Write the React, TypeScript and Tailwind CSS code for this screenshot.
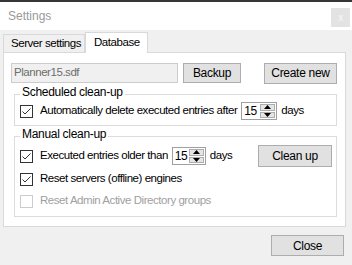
import React from "react";

// WinForms "Settings" dialog, Database tab
function Check({ checked, disabled }: { checked?: boolean; disabled?: boolean }) {
  return (
    <span
      className={`grid h-[13px] w-[13px] shrink-0 place-items-center border bg-white ${
        disabled ? "border-[#cccccc]" : "border-[#333333]"
      }`}
    >
      {checked && (
        <svg width="11" height="11" viewBox="0 0 11 11">
          <polyline points="1.5,5.5 4,8 9.5,2.5" fill="none" stroke="#333333" strokeWidth="1" />
        </svg>
      )}
    </span>
  );
}

function Spinner({ value, w }: { value: string; w: string }) {
  return (
    <span className={`flex h-[18px] shrink-0 items-center border border-[#a0a0a0] bg-white ${w}`}>
      <span className="flex-1 pl-[2px] text-[12px] leading-none text-black">{value}</span>
      <span className="mr-[1px] flex h-[14px] w-[15px] flex-col gap-[1px]">
        <span className="grid flex-1 place-items-center border border-[#adadad] bg-[#e5e5e5]">
          <svg width="7" height="4" viewBox="0 0 7 4">
            <polygon points="0,4 7,4 3.5,0" fill="#000" />
          </svg>
        </span>
        <span className="grid flex-1 place-items-center border border-[#adadad] bg-[#e5e5e5]">
          <svg width="7" height="4" viewBox="0 0 7 4">
            <polygon points="0,0 7,0 3.5,4" fill="#000" />
          </svg>
        </span>
      </span>
    </span>
  );
}

function Btn({ children, w, h = "h-[21px]" }: { children: React.ReactNode; w: string; h?: string }) {
  return (
    <button className={`${w} ${h} shrink-0 border border-[#adadad] bg-[#e1e1e1] text-[12px] leading-none tracking-[-0.3px] text-black`}>
      {children}
    </button>
  );
}

function Group({ title, h, children }: { title: string; h: string; children: React.ReactNode }) {
  return (
    <div className={`relative ml-[10px] mr-[8px] border border-[#dcdcdc] ${h}`}>
      <span className="absolute -top-[10px] left-[5px] bg-white px-[2px] text-[12px] leading-[14px] tracking-[-0.3px] text-black">
        {title}
      </span>
      {children}
    </div>
  );
}

export default function App() {
  return (
    <div
      className="flex h-[265px] w-[352px] flex-col overflow-hidden whitespace-nowrap bg-[#f0f0f0] text-[11.5px] tracking-[-0.45px] text-black"
      style={{ fontFamily: '"Liberation Sans", Arial, sans-serif' }}
    >
      <div className="h-[2px] bg-[#363636]" />
      <div className="flex h-[28px] items-start justify-between bg-white">
        <span className="mt-[6px] pl-[8px] text-[12px] leading-[16px] tracking-normal text-[#9a9a9a]">Settings</span>
        <span className="mr-[2px] mt-[6px] grid h-[19px] w-[19px] place-items-center bg-[#e3e3e3] text-[10px] leading-none text-[#f7f7f7]">
          x
        </span>
      </div>

      {/* tabs */}
      <div className="flex h-[22px] items-end pl-[3px]">
        <div className="flex h-[18px] w-[82px] items-center border border-b-0 border-[#d9d9d9] bg-[#f0f0f0] pl-[7px] leading-none">
          Server settings
        </div>
        <div className="relative z-10 -mb-[1px] flex h-[21px] w-[63px] items-center border border-b-0 border-[#d9d9d9] bg-white pl-[8px] leading-none">
          Database
        </div>
      </div>

      <div className="ml-[3px] flex h-[175px] w-[343px] flex-col border border-[#d9d9d9] bg-white">
        <div className="mt-[9px] flex h-[22px] items-center pl-[7px]">
          <span className="flex h-[20px] w-[167px] items-center border border-[#cccccc] bg-[#f0f0f0] pl-[2px] leading-none text-[#6d6d6d]">
            Planner15.sdf
          </span>
          <span className="ml-[5px]">
            <Btn w="w-[58px]" h="h-[20px]">Backup</Btn>
          </span>
          <span className="ml-[23px]">
            <Btn w="w-[73px]">Create new</Btn>
          </span>
        </div>

        <div className="mt-[10px]">
          <Group title="Scheduled clean-up" h="h-[32px]">
            <div className="mt-[7px] flex h-[18px] items-center pl-[5px]">
              <Check checked />
              <span className="ml-[7px] leading-none">Automatically delete executed entries after</span>
              <span className="ml-[4px]">
                <Spinner value="15" w="w-[36px]" />
              </span>
              <span className="ml-[4px] leading-none">days</span>
            </div>
          </Group>
        </div>

        <div className="mt-[10px]">
          <Group title="Manual clean-up" h="h-[81px]">
            <div className="mt-[8px] flex h-[22px] items-center pl-[5px] pr-[4px]">
              <Check checked />
              <span className="ml-[7px] leading-none">Executed entries older than</span>
              <span className="ml-[4px]">
                <Spinner value="15" w="w-[34px]" />
              </span>
              <span className="ml-[4px] leading-none">days</span>
              <span className="ml-auto">
                <Btn w="w-[74px]" h="h-[22px]">Clean up</Btn>
              </span>
            </div>
            <div className="mt-[1px] flex h-[22px] items-center pl-[5px]">
              <Check checked />
              <span className="ml-[7px] leading-none">Reset servers (offline) engines</span>
            </div>
            <div className="flex h-[22px] items-center pl-[5px]">
              <Check disabled />
              <span className="ml-[7px] leading-none text-[#a0a0a0]">Reset Admin Active Directory groups</span>
            </div>
          </Group>
        </div>
      </div>

      <div className="mt-[8px] flex justify-end pr-[8px]">
        <Btn w="w-[73px]">Close</Btn>
      </div>
    </div>
  );
}
